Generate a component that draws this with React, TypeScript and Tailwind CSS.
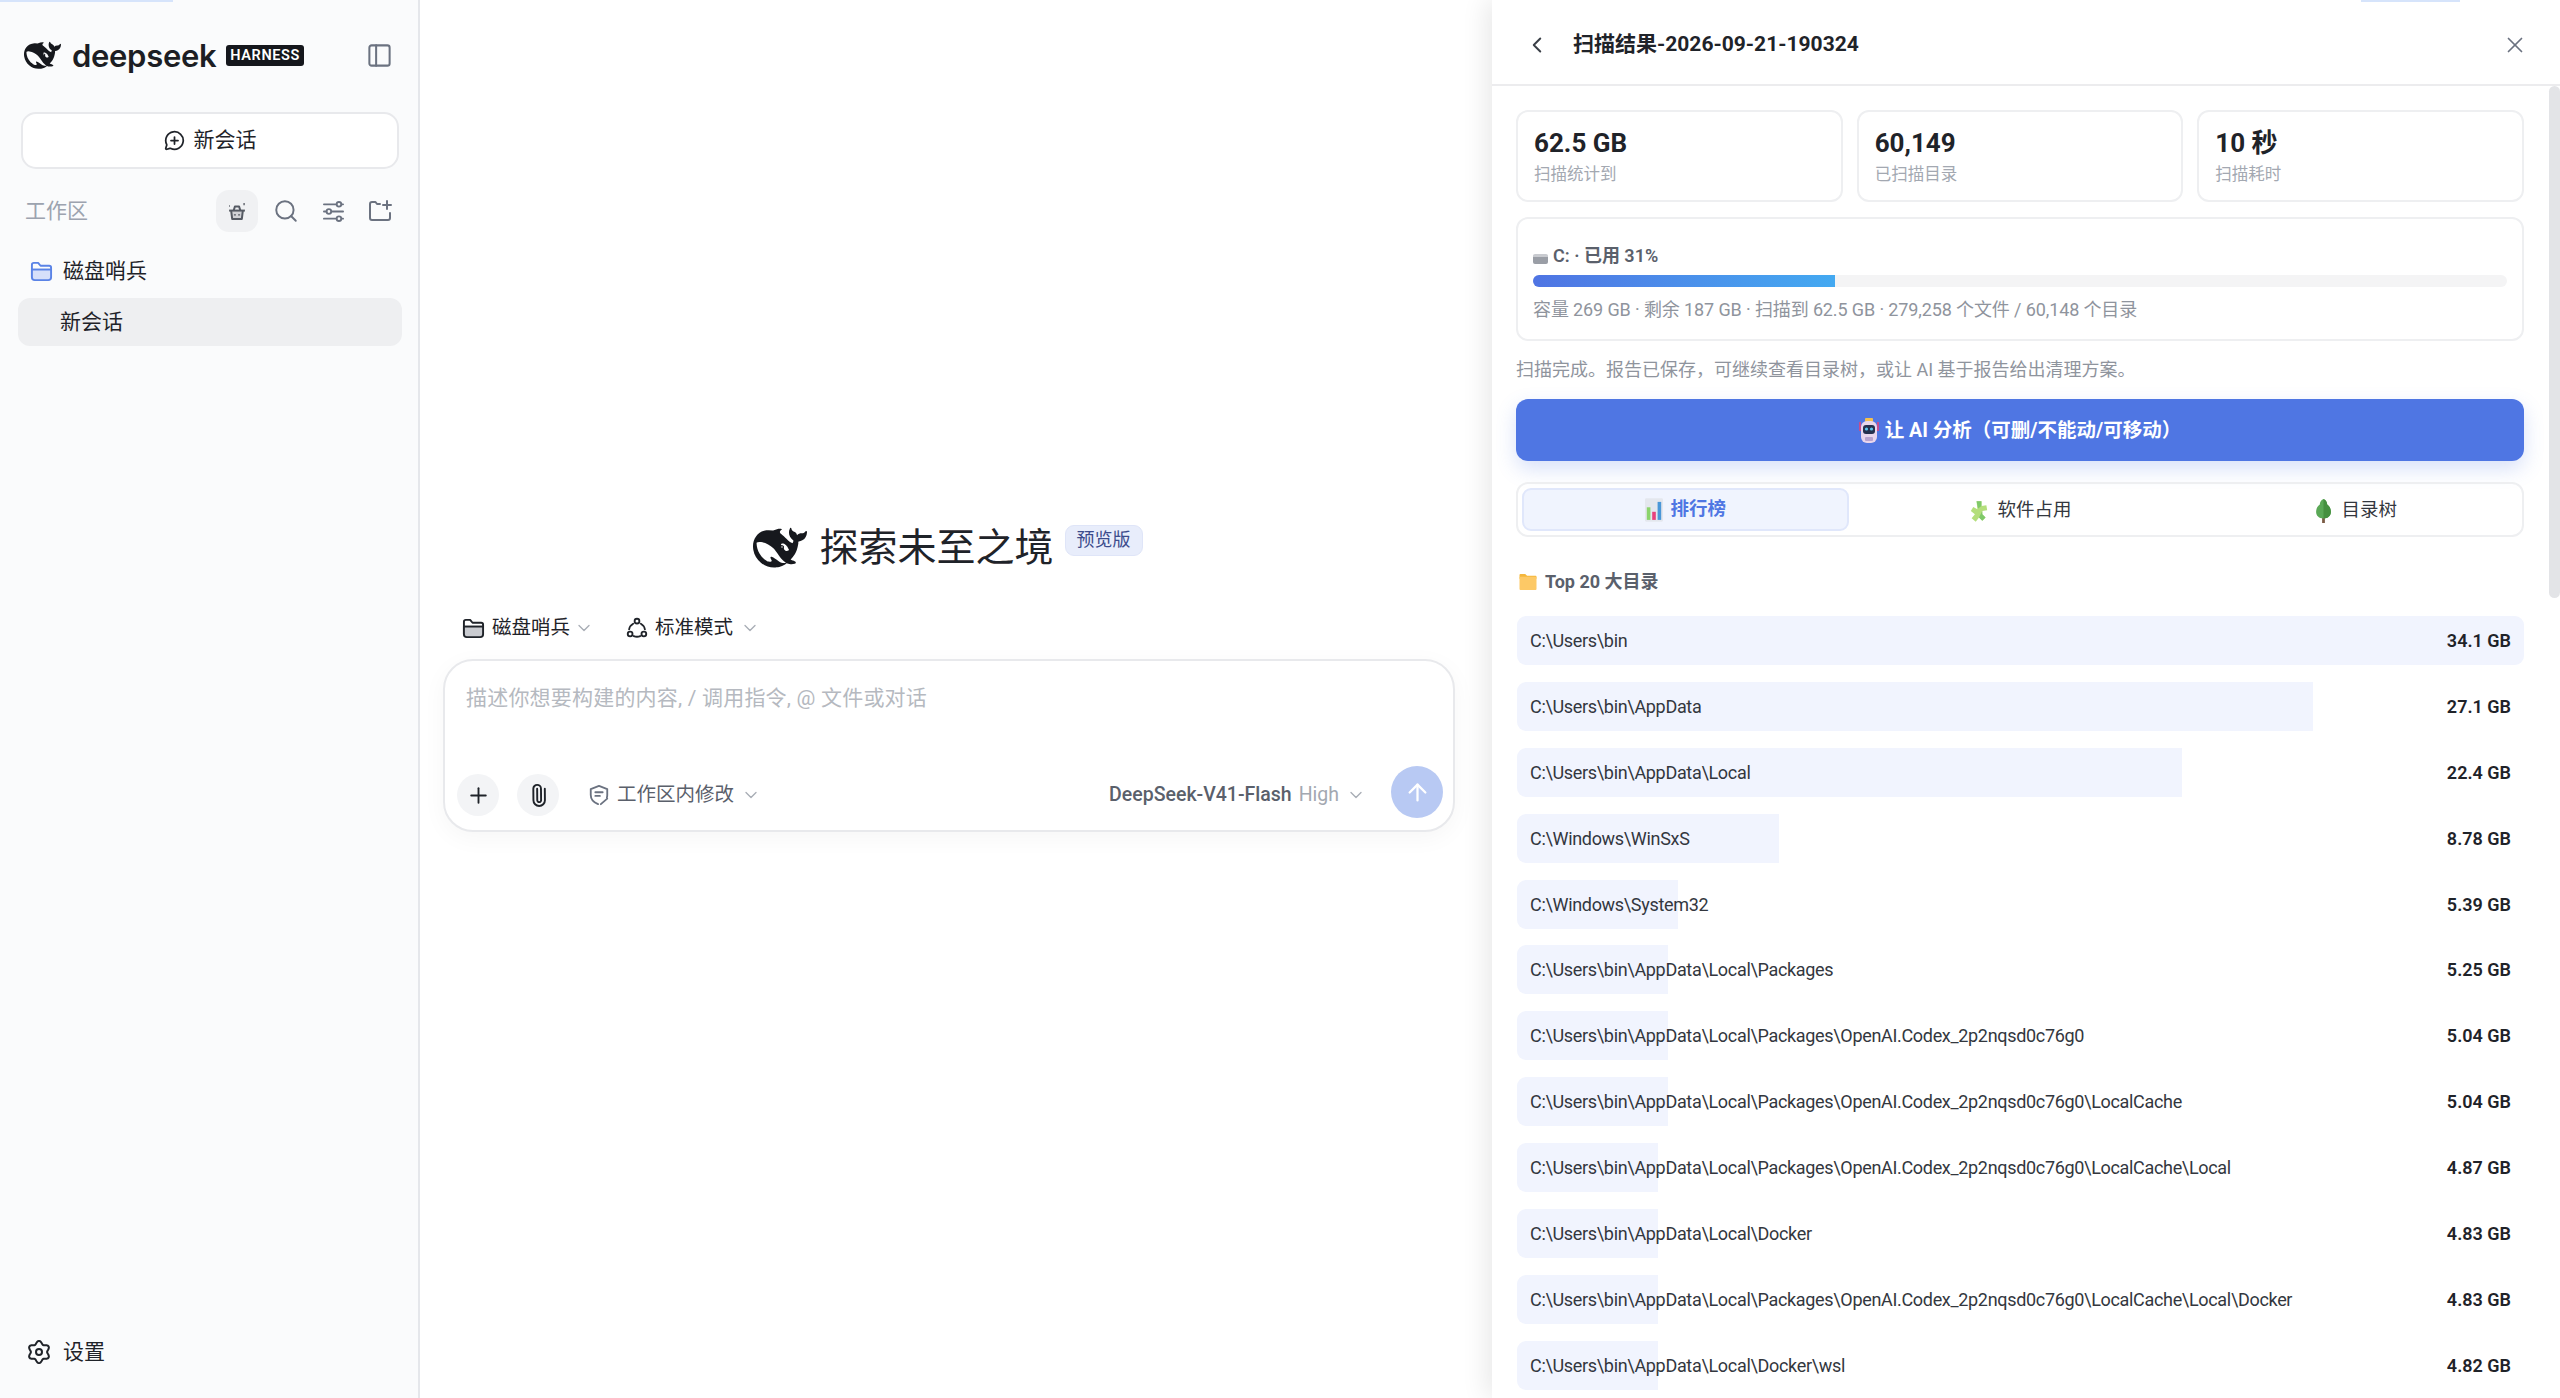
import React from "react";
import { ChevronDown, ChevronLeft, Paperclip, PanelLeft, Plus, Search, ArrowUp, X, MessageCirclePlus } from "lucide-react";

const WHALE =
  "M23.748 4.482c-.254-.124-.364.113-.512.234-.051.039-.094.09-.137.136-.372.397-.806.657-1.373.626-.829-.046-1.537.214-2.163.848-.133-.782-.575-1.248-1.247-1.548-.352-.156-.708-.311-.955-.65-.172-.241-.219-.51-.305-.774-.055-.16-.11-.323-.293-.35-.2-.031-.278.136-.356.276-.313.572-.434 1.202-.422 1.84.027 1.436.633 2.58 1.838 3.393.137.093.172.187.129.323-.082.28-.18.552-.266.833-.055.179-.137.217-.329.14a5.526 5.526 0 01-1.736-1.18c-.857-.828-1.631-1.742-2.597-2.458a11.365 11.365 0 00-.689-.471c-.985-.957.13-1.743.388-1.836.27-.098.093-.432-.779-.428-.872.004-1.67.295-2.687.684a3.055 3.055 0 01-.465.137 9.597 9.597 0 00-2.883-.102c-1.885.21-3.39 1.102-4.497 2.623C.082 8.606-.231 10.684.152 12.85c.403 2.284 1.569 4.175 3.36 5.653 1.858 1.533 3.997 2.284 6.438 2.14 1.482-.085 3.133-.284 4.994-1.86.47.234.962.327 1.78.397.63.059 1.236-.03 1.705-.128.735-.156.684-.837.419-.961-2.155-1.004-1.682-.595-2.113-.926 1.096-1.296 2.746-2.642 3.392-7.003.05-.347.007-.565 0-.845-.004-.17.035-.237.23-.256a4.173 4.173 0 001.545-.475c1.396-.763 1.96-2.015 2.093-3.517.02-.23-.004-.467-.247-.588zM11.581 18c-2.089-1.642-3.102-2.183-3.52-2.16-.392.024-.321.471-.235.763.09.288.207.486.371.739.114.167.192.416-.113.603-.673.416-1.842-.14-1.897-.167-1.361-.802-2.5-1.86-3.301-3.307-.774-1.393-1.224-2.887-1.298-4.482-.02-.386.093-.522.477-.592a4.696 4.696 0 011.529-.039c2.132.312 3.946 1.265 5.468 2.774.868.86 1.525 1.887 2.202 2.891.72 1.066 1.494 2.082 2.48 2.914.348.292.625.514.891.677-.802.09-2.14.11-3.054-.614zm1-6.44a.306.306 0 01.415-.287.302.302 0 01.2.288.306.306 0 01-.31.307.303.303 0 01-.304-.308zm3.11 1.596c-.2.081-.399.151-.59.16a1.245 1.245 0 01-.798-.254c-.274-.23-.47-.358-.552-.758a1.73 1.73 0 01.016-.588c.07-.327-.008-.537-.239-.727-.187-.156-.426-.199-.688-.199a.559.559 0 01-.254-.078c-.11-.054-.2-.19-.114-.358.028-.054.16-.186.192-.21.356-.202.767-.136 1.146.016.352.144.618.408 1.001.782.391.451.462.576.685.914.176.265.336.537.445.848.067.195-.019.354-.25.452z";

function Whale({ className }: { className?: string }) {
  return (
    <svg viewBox="0 0 24 24" className={className} fill="currentColor">
      <path d={WHALE} />
    </svg>
  );
}

function BasketIcon({ className }: { className?: string }) {
  return (
    <svg viewBox="0 0 24 24" className={className} fill="none" stroke="currentColor" strokeWidth="2.4" strokeLinejoin="round">
      <path d="M2.5 11.5h19" />
      <path d="M5 11.5l1.2 10h11.6l1.2-10" fill="currentColor" fillOpacity="0.2" />
      <path d="M8 11.5l1.5-5h5l1.5 5" />
      <path d="M9.5 16v1.5M14.5 16v1.5" />
      <path d="M2.5 6h1M20.5 2.5v2.5" strokeWidth="1.6" />
    </svg>
  );
}

function SlidersIcon({ className }: { className?: string }) {
  return (
    <svg viewBox="0 0 24 24" className={className} fill="none" stroke="currentColor" strokeWidth="1.9" strokeLinecap="round">
      <path d="M2 4.5h13M20.5 4.5H22M2 12h2.5M10 12h12M2 19.5h13M20.5 19.5H22" />
      <circle cx="17.7" cy="4.5" r="2.4" />
      <circle cx="7.2" cy="12" r="2.4" />
      <circle cx="17.7" cy="19.5" r="2.4" />
    </svg>
  );
}

function FolderPlusIcon({ className }: { className?: string }) {
  return (
    <svg viewBox="0 0 24 24" className={className} fill="none" stroke="currentColor" strokeWidth="2" strokeLinecap="round" strokeLinejoin="round">
      <path d="M12 5H9L7.5 3H4a2 2 0 0 0-2 2v14a2 2 0 0 0 2 2h16a2 2 0 0 0 2-2v-5" />
      <path d="M19 2v8M15 6h8" />
    </svg>
  );
}

function OpenFolderIcon({ className, fill }: { className?: string; fill: string }) {
  return (
    <svg viewBox="0 0 24 24" className={className} fill="none" stroke="currentColor" strokeWidth="2" strokeLinejoin="round">
      <path d="M2 18V5a2 2 0 0 1 2-2h4.5l2.5 3h9a2 2 0 0 1 2 2v2H2" />
      <path d="M2 10h20v8a3 3 0 0 1-3 3H5a3 3 0 0 1-3-3z" fill={fill} />
    </svg>
  );
}

function ModeIcon({ className }: { className?: string }) {
  return (
    <svg viewBox="0 0 24 24" className={className} fill="none" stroke="currentColor" strokeWidth="2" strokeLinecap="round">
      <circle cx="12" cy="4.5" r="2.6" />
      <circle cx="4.5" cy="18.5" r="2.6" />
      <circle cx="19.5" cy="18.5" r="2.6" />
      <path d="M7.8 7.4A9 9 0 0 0 3.4 13.5M16.2 7.4a9 9 0 0 1 4.4 6.1M8.5 20.8a9 9 0 0 0 7 0" />
    </svg>
  );
}

function ShieldEditIcon({ className }: { className?: string }) {
  return (
    <svg viewBox="0 0 24 24" className={className} fill="none" stroke="currentColor" strokeWidth="2" strokeLinecap="round" strokeLinejoin="round">
      <path d="M11 22C6 20 3 16.5 3 12V5.5L12 2l9 3.5V12c0 1-.15 1.9-.4 2.8" />
      <path d="M8 9h8M8 13h5M14 22l7-6" />
    </svg>
  );
}

// six-lobed cog, same shape as the app's settings glyph
function flowerPath() {
  const pts: string[] = [];
  for (let i = 0; i < 72; i++) {
    const a = (i / 72) * Math.PI * 2 - Math.PI / 2;
    const r = 9.6 + 1.5 * Math.cos(6 * a + Math.PI * 3);
    pts.push(`${(12 + r * Math.cos(a)).toFixed(2)} ${(12 + r * Math.sin(a)).toFixed(2)}`);
  }
  return `M${pts.join("L")}Z`;
}

function SettingsIcon({ className }: { className?: string }) {
  return (
    <svg viewBox="0 0 24 24" className={className} fill="none" stroke="currentColor" strokeWidth="2" strokeLinejoin="round">
      <path d={flowerPath()} />
      <circle cx="12" cy="12" r="3" />
    </svg>
  );
}

function RobotIcon() {
  return (
    <svg viewBox="0 0 20 28" className="w-[20px] h-[28px]">
      <path d="M1 5v9M19 5v9" stroke="#e0457b" strokeWidth="1.6" />
      <rect x="6" y="1" width="8" height="4" rx="1" fill="#f4c04e" />
      <rect x="2" y="4" width="16" height="22" rx="6" fill="#e9d6ec" />
      <rect x="4" y="8" width="12" height="9" rx="3" fill="#26304d" />
      <circle cx="7.5" cy="12" r="1.6" fill="#5cc6ef" />
      <circle cx="12.5" cy="12" r="1.6" fill="#5cc6ef" />
      <rect x="6" y="20" width="8" height="4" rx="1" fill="#b9a3cf" />
    </svg>
  );
}

function ChartEmoji() {
  return (
    <svg viewBox="0 0 20 26" className="w-[18px] h-[24px]">
      <rect width="20" height="26" rx="1.5" fill="#e4e7ee" />
      <rect x="2" y="10" width="4" height="14" fill="#8bd46c" />
      <rect x="8" y="15" width="4" height="9" fill="#e8407c" />
      <rect x="14" y="4" width="4" height="20" fill="#4a97d8" />
    </svg>
  );
}

function PuzzleEmoji() {
  return (
    <svg viewBox="0 0 22 26" className="w-[18px] h-[24px]">
      <path d="M8 1h6v6l6-1 1 6-6 1v4l4 4-4 4-4-4-4 5-5-4 4-5-5-4 3-5 5 3z" fill="#b4de7c" />
      <path d="M8 1h6v6l-4 3zM15 13v4l4 4-4 4-4-4z" fill="#7fc96a" />
    </svg>
  );
}

function TreeEmoji() {
  return (
    <svg viewBox="0 0 18 26" className="w-[17px] h-[24px]">
      <rect x="7.5" y="18" width="3" height="8" fill="#7a5b44" />
      <path d="M9 0c3 1 4 4 4 6 3 2 4 5 4 8 0 4-3 7-8 7s-8-3-8-7c0-3 1-6 4-8 0-2 1-5 4-6z" fill="#5aa856" />
      <path d="M9 0c3 1 4 4 4 6 3 2 4 5 4 8 0 4-3 7-8 7z" fill="#45903f" />
    </svg>
  );
}

function FolderEmoji() {
  return (
    <svg viewBox="0 0 18 18" className="w-[18px] h-[17px]">
      <path d="M0 2a1 1 0 0 1 1-1h5l2 2h9a1 1 0 0 1 1 1v2H0z" fill="#f4b73d" />
      <rect y="4" width="18" height="14" rx="1" fill="#fdc966" />
    </svg>
  );
}

const STATS = [
  { value: "62.5 GB", label: "扫描统计到" },
  { value: "60,149", label: "已扫描目录" },
  { value: "10 秒", label: "扫描耗时" },
];

const ROWS = [
  { path: "C:\\Users\\bin", size: "34.1 GB", gb: 34.1 },
  { path: "C:\\Users\\bin\\AppData", size: "27.1 GB", gb: 27.1 },
  { path: "C:\\Users\\bin\\AppData\\Local", size: "22.4 GB", gb: 22.4 },
  { path: "C:\\Windows\\WinSxS", size: "8.78 GB", gb: 8.78 },
  { path: "C:\\Windows\\System32", size: "5.39 GB", gb: 5.39 },
  { path: "C:\\Users\\bin\\AppData\\Local\\Packages", size: "5.25 GB", gb: 5.25 },
  { path: "C:\\Users\\bin\\AppData\\Local\\Packages\\OpenAI.Codex_2p2nqsd0c76g0", size: "5.04 GB", gb: 5.04 },
  { path: "C:\\Users\\bin\\AppData\\Local\\Packages\\OpenAI.Codex_2p2nqsd0c76g0\\LocalCache", size: "5.04 GB", gb: 5.04 },
  { path: "C:\\Users\\bin\\AppData\\Local\\Packages\\OpenAI.Codex_2p2nqsd0c76g0\\LocalCache\\Local", size: "4.87 GB", gb: 4.87 },
  { path: "C:\\Users\\bin\\AppData\\Local\\Docker", size: "4.83 GB", gb: 4.83 },
  { path: "C:\\Users\\bin\\AppData\\Local\\Packages\\OpenAI.Codex_2p2nqsd0c76g0\\LocalCache\\Local\\Docker", size: "4.83 GB", gb: 4.83 },
  { path: "C:\\Users\\bin\\AppData\\Local\\Docker\\wsl", size: "4.82 GB", gb: 4.82 },
];

function Sidebar() {
  return (
    <aside className="w-[420px] shrink-0 h-full bg-[#fafbfc] border-r-2 border-[#e5e7eb] flex flex-col">
      {/* Logo */}
      <div className="h-[110px] pl-[24px] pr-[25px] flex items-center">
        <Whale className="w-[37px] h-[37px] text-[#16181d]" />
        <span className="ml-[11px] text-[31px] font-semibold text-[#1c1e24] leading-none tracking-[-0.3px] font-[Inter,sans-serif]">deepseek</span>
        <span className="ml-[10px] h-[21px] px-[4px] rounded-[3px] bg-[#15171c] text-white text-[14.5px] font-semibold tracking-[0.6px] leading-[21px]">HARNESS</span>
        <PanelLeft className="ml-auto w-[27px] h-[27px] text-[#6b7280]" strokeWidth={1.8} />
      </div>

      <div className="px-[21px] pt-[2px]">
        <div className="h-[57px] w-[378px] bg-white border-2 border-[#e8e9ec] rounded-[15px] flex items-center justify-center gap-[9px] text-[21px] text-[#1f2329]">
          <MessageCirclePlus className="w-[21px] h-[21px]" strokeWidth={2} />
          新会话
        </div>
      </div>

      {/* Workspace header */}
      <div className="mt-[21px] h-[42px] pl-[25px] pr-[26px] flex items-center">
        <span className="pt-[2px] text-[21px] text-[#9ca3af]">工作区</span>
        <div className="ml-auto w-[42px] h-[42px] rounded-[13px] bg-[#f0f1f3] flex items-center justify-center text-[#555a63]">
          <BasketIcon className="w-[20px] h-[20px]" />
        </div>
        <Search className="ml-[15px] w-[26px] h-[26px] text-[#6b7280]" strokeWidth={1.8} />
        <SlidersIcon className="ml-[23px] w-[23px] h-[23px] text-[#6b7280]" />
        <FolderPlusIcon className="ml-[23px] w-[24px] h-[24px] text-[#6b7280]" />
      </div>

      <div className="mt-[18px] h-[42px] pl-[30px] flex items-center gap-[10px] text-[21px] text-[#1f2329]">
        <OpenFolderIcon className="w-[23px] h-[23px] text-[#5a83e6]" fill="#d6e0fa" />
        <span className="pt-[2px]">磁盘哨兵</span>
      </div>
      <div className="mt-[6px] ml-[18px] w-[384px] h-[48px] rounded-[12px] bg-[#eeeff1] pl-[42px] pt-[2px] flex items-center text-[21px] text-[#1f2329]">
        新会话
      </div>

      <div className="mt-auto mb-[30px] pl-[27px] flex items-center gap-[12px] text-[21px] text-[#1f2329]">
        <SettingsIcon className="w-[24px] h-[24px]" />
        设置
      </div>
    </aside>
  );
}

function Composer() {
  return (
    <main className="flex-1 min-w-0 pl-[23px] pr-[37px] pt-[525px]">
      <div className="flex items-start justify-center pl-[2px] pr-[4px]">
        <Whale className="w-[54px] h-[54px] mt-[-4px] text-[#16181d]" />
        <h1 className="ml-[12px] text-[39px] leading-[50px] mt-[-2px] text-[#1f2329] font-normal">探索未至之境</h1>
        <span className="ml-[11px] h-[31px] px-[11px] rounded-[9px] bg-[#e8edfb] border border-[#dfe5f8] text-[18px] leading-[28px] text-[#3c4c8c]">预览版</span>
      </div>

      <div className="mt-[39px] pl-[19px] h-[28px] flex items-center text-[19.5px] text-[#1f2329]">
        <OpenFolderIcon className="w-[23px] h-[23px] text-[#1f2329]" fill="#c9cbd0" />
        <span className="ml-[7px]">磁盘哨兵</span>
        <ChevronDown className="ml-[4px] w-[20px] h-[20px] text-[#a8adb5]" strokeWidth={1.6} />
        <ModeIcon className="ml-[32px] w-[22px] h-[22px] text-[#1f2329]" />
        <span className="ml-[7px]">标准模式</span>
        <ChevronDown className="ml-[7px] w-[20px] h-[20px] text-[#a8adb5]" strokeWidth={1.6} />
      </div>

      <div className="mt-[17px] h-[173px] bg-white border-2 border-[#e8e9ec] rounded-[30px] shadow-[0_6px_24px_rgba(0,0,0,0.04)] flex flex-col justify-between pl-[12px] pr-[10px] pb-[6px]">
        <div className="pl-[9px] pt-[22px] text-[21px] leading-[30px] tracking-[0.2px] text-[#b5b9c0]">描述你想要构建的内容, / 调用指令, @ 文件或对话</div>
        <div className="flex items-center text-[19.5px]">
          <div className="w-[42px] h-[42px] rounded-full bg-[#f3f4f6] flex items-center justify-center text-[#1f2329]">
            <Plus className="w-[25px] h-[25px]" strokeWidth={1.8} />
          </div>
          <div className="ml-[18px] w-[42px] h-[42px] rounded-full bg-[#f3f4f6] flex items-center justify-center text-[#1f2329]">
            <Paperclip className="w-[23px] h-[23px] rotate-[-45deg]" strokeWidth={2} />
          </div>
          <ShieldEditIcon className="ml-[29px] w-[22px] h-[22px] text-[#6b7280]" />
          <span className="ml-[7px] text-[#5a606b]">工作区内修改</span>
          <ChevronDown className="ml-[7px] w-[20px] h-[20px] text-[#a8adb5]" strokeWidth={1.6} />
          <span className="ml-auto text-[#5a606b] font-medium">DeepSeek-V41-Flash</span>
          <span className="ml-[7px] text-[#a3a8b1]">High</span>
          <ChevronDown className="ml-[7px] w-[20px] h-[20px] text-[#a8adb5]" strokeWidth={1.6} />
          <div className="ml-[25px] w-[52px] h-[52px] rounded-full bg-[#b8c9f3] flex items-center justify-center text-white mb-[6px]">
            <ArrowUp className="w-[27px] h-[27px]" strokeWidth={2} />
          </div>
        </div>
      </div>
    </main>
  );
}

function ResultRow({ path, size, gb }: { path: string; size: string; gb: number }) {
  const pct = Math.round((gb / 34.1) * 100);
  return (
    <div className="relative h-[49px] flex items-center justify-between pl-[13px] pr-[13px] text-[18px]">
      <div className="absolute left-0 top-0 bottom-0 rounded-l-[9px] bg-[#f1f4fe]" style={{ width: `${pct}%`, borderRadius: pct === 100 ? 9 : undefined }} />
      <span className="relative tracking-[-0.32px] text-[#33373e]">{path}</span>
      <span className="relative font-semibold text-[#1f2329]">{size}</span>
    </div>
  );
}

function ResultsPanel() {
  return (
    <section className="relative z-10 w-[1068px] shrink-0 h-full bg-white shadow-[-6px_0_24px_rgba(0,0,0,0.09)] flex flex-col">
      <header className="h-[86px] shrink-0 border-b-2 border-[#ececee] flex items-center pt-[5px] pl-[32px] pr-[32px]">
        <ChevronLeft className="w-[26px] h-[26px] text-[#3a3f47]" strokeWidth={1.8} />
        <h2 className="ml-[23px] text-[21px] font-bold text-[#1f2329]">扫描结果-2026-09-21-190324</h2>
        <X className="ml-auto w-[26px] h-[26px] text-[#6b7280]" strokeWidth={1.6} />
      </header>

      <div className="relative flex-1 min-h-0 overflow-hidden pl-[24px] pr-[36px] pt-[24px]">
        <div className="absolute right-0 top-0 w-[11px] h-[512px] rounded-full bg-[#e3e4e7]" />

        <div className="grid grid-cols-3 gap-[14px]">
          {STATS.map((s) => (
            <div key={s.label} className="h-[92px] border-2 border-[#eeeff1] rounded-[12px] pl-[16px] pt-[14px]">
              <div className="text-[26px] leading-[34px] font-bold text-[#1f2329]">{s.value}</div>
              <div className="mt-[3px] text-[16.5px] leading-[24px] text-[#a3a8b1]">{s.label}</div>
            </div>
          ))}
        </div>

        <div className="mt-[15px] h-[124px] border-2 border-[#eeeff1] rounded-[12px] px-[15px] pt-[24px]">
          <div className="flex items-center text-[18px] leading-[26px] font-semibold text-[#5a606b]">
            <span className="inline-block w-[15px] h-[10px] mt-[5px] rounded-[2px] bg-[#9a9ea6] border-t-[3px] border-[#c9cbd0]" />
            <span className="ml-[5px]">C: · 已用 31%</span>
          </div>
          <div className="mt-[6px] h-[12px] rounded-full bg-[#f4f4f5] overflow-hidden">
            <div className="h-full w-[31%] bg-gradient-to-r from-[#4f74e3] to-[#43a9f1]" />
          </div>
          <div className="mt-[10px] text-[18px] leading-[26px] tracking-[-0.12px] text-[#8f949d]">容量 269 GB · 剩余 187 GB · 扫描到 62.5 GB · 279,258 个文件 / 60,148 个目录</div>
        </div>

        <div className="mt-[16px] text-[18px] leading-[26px] text-[#8f949d]">扫描完成。报告已保存，可继续查看目录树，或让 AI 基于报告给出清理方案。</div>

        <button className="mt-[16px] w-full h-[62px] rounded-[12px] bg-[#4f76e3] shadow-[0_8px_20px_rgba(79,118,227,0.22)] flex items-center justify-center gap-[6px] pt-[1px] text-white text-[19.5px] font-bold">
          <RobotIcon />
          让 AI 分析（可删/不能动/可移动）
        </button>

        <div className="mt-[21px] h-[55px] border-2 border-[#eeeff1] rounded-[12px] grid grid-cols-3 gap-[8px] p-[4px] text-[18.5px]">
          <div className="rounded-[9px] bg-[#f0f4fe] border-2 border-[#e0e7fb] flex items-center justify-center gap-[8px] pt-[1px] font-semibold text-[#4f76e3]">
            <ChartEmoji />
            排行榜
          </div>
          <div className="flex items-center justify-center gap-[9px] pl-[2px] pt-[2px] text-[#33373e]">
            <PuzzleEmoji />
            软件占用
          </div>
          <div className="flex items-center justify-center gap-[9px] pl-[3px] pt-[2px] text-[#33373e]">
            <TreeEmoji />
            目录树
          </div>
        </div>

        <div className="mt-[30px] pl-[3px] h-[28px] flex items-center gap-[8px] text-[18px] font-bold text-[#5a606b]">
          <FolderEmoji />
          Top 20 大目录
        </div>

        <div className="mt-[21px] pl-[1px] flex flex-col gap-[16.9px]">
          {ROWS.map((r) => (
            <ResultRow key={r.path} {...r} />
          ))}
        </div>
      </div>
    </section>
  );
}

export default function App() {
  return (
    <div className="relative w-[2560px] h-[1398px] overflow-hidden bg-white flex font-[Roboto,'Noto_Sans_CJK_SC',sans-serif]">
      <Sidebar />
      <Composer />
      <ResultsPanel />
      {/* thin loading strips along the top edge */}
      <div className="absolute z-20 left-0 top-0 w-[173px] h-[2px] bg-[#d6e4fb]" />
      <div className="absolute z-20 left-[2361px] top-0 w-[99px] h-[2px] bg-[#d6e4fb]" />
    </div>
  );
}
